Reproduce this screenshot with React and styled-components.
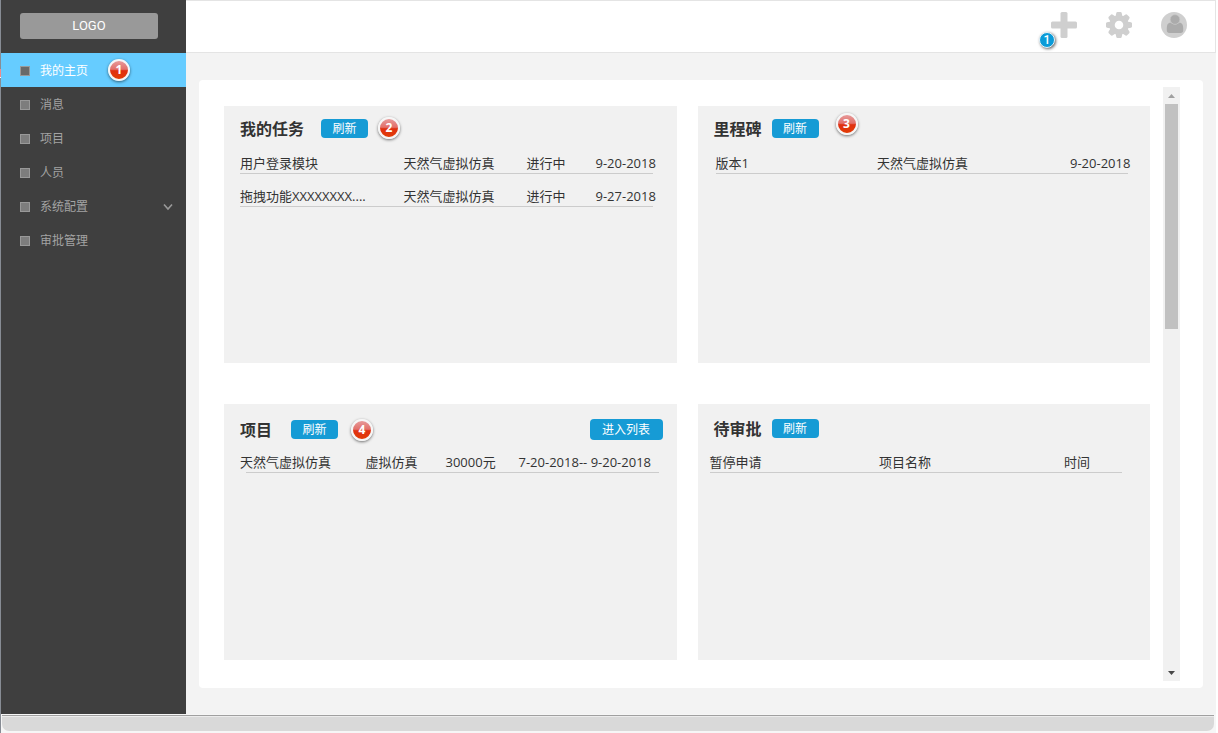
import React from "react";
import styled, { createGlobalStyle } from "styled-components";

const GlobalStyle = createGlobalStyle`
  *, *::before, *::after { box-sizing: border-box; }
  body {
    margin: 0;
    background: #fff;
    color: #333;
    font-family: "Open Sans", "Noto Sans CJK SC", sans-serif;
    font-size: 13px;
  }
  button { font-family: inherit; cursor: pointer; }
`;

const Shell = styled.div`
  position: relative;
  display: flex;
  flex-direction: column;
  min-height: 100vh;
  padding-right: 2px;
  border-left: 1px solid #878c94;
`;

const EdgeMark = styled.span`
  position: absolute;
  left: -1px;
  top: 69px;
  width: 1px;
  height: 9px;
  background: #ef8a8a;
  border-bottom: 1px solid #fff;
`;

const Body = styled.div`
  display: flex;
  flex: 1;
`;

const Sidebar = styled.aside`
  flex: 0 0 185px;
  background: #3f3f3f;
`;

const Logo = styled.div`
  height: 26px;
  margin: 13px 28px 14px 19px;
  border-radius: 3px;
  background: #999;
  color: #fff;
  font: 400 13px/26px Roboto, sans-serif;
  text-align: center;
`;

const NavItem = styled.a`
  position: relative;
  display: flex;
  align-items: center;
  gap: 10px;
  height: 34px;
  padding: 2px 13px 0 19px;
  background: ${(p) => (p.$active ? "#66ccff" : "transparent")};
  color: ${(p) => (p.$active ? "#fff" : "#a3a3a3")};
  font-size: 12px;
  line-height: 18px;
  text-decoration: none;

  &::before {
    content: "";
    width: 10px;
    height: 10px;
    border: 1px solid #999;
    background: ${(p) => (p.$active ? "#696969" : "#7d7d7d")};
  }
  svg { margin-left: auto; }
`;

const Content = styled.div`
  display: flex;
  flex: 1;
  flex-direction: column;
  min-width: 0;
  background: #f3f3f3;
`;

const TopBar = styled.header`
  display: flex;
  justify-content: flex-end;
  align-items: center;
  gap: 29px;
  height: 53px;
  padding: 0 28px 3px 0;
  border: 1px solid #e4e4e4;
  border-left: 0;
  background: #fff;
`;

const IconButton = styled.button`
  position: relative;
  width: 26px;
  height: 26px;
  padding: 0;
  border: 0;
  background: none;
  svg { display: block; }
`;

const CountBadge = styled.span`
  position: absolute;
  left: -12px;
  top: 20px;
  width: 16px;
  height: 16px;
  border: 1px solid #e8f4fa;
  border-radius: 50%;
  background: #0b9bd8;
  box-shadow: 1px 1px 3px rgba(0, 0, 0, 0.6);
  color: #fff;
  font: 500 12px/14px Roboto, sans-serif;
  text-align: center;
`;

const Card = styled.main`
  display: flex;
  flex: 1;
  gap: 13px;
  margin: 27px 13px 26px;
  padding: 7px 23px 7px 25px;
  border-radius: 4px;
  background: #fff;
`;

const Panels = styled.div`
  display: grid;
  flex: 1;
  grid-template-columns: repeat(2, minmax(0, 1fr));
  grid-auto-rows: minmax(240px, 1fr);
  gap: 41px 21px;
  padding: 19px 0 21px;
`;

const PanelBox = styled.section`
  position: relative;
  background: #f1f1f1;
`;

const PanelHead = styled.div`
  display: flex;
  align-items: center;
  gap: ${(p) => p.$gap}px;
  height: ${(p) => p.$height}px;
  padding: ${(p) => p.$drop}px 14px 0 16px;
`;

const Title = styled.h2`
  margin: 0;
  color: #333;
  font-size: 16px;
  font-weight: 700;
  line-height: 20px;
`;

const ActionButton = styled.button`
  height: ${(p) => (p.$wide ? 21 : 19)}px;
  width: ${(p) => (p.$wide ? 73 : 47)}px;
  margin-left: ${(p) => (p.$wide ? "auto" : "0")};
  padding: 0;
  border: 0;
  border-radius: 4px;
  background: #169bd5;
  color: #fff;
  font-size: 12px;
  line-height: 18px;
`;

const Pin = styled.span`
  position: absolute;
  left: ${(p) => p.$x}px;
  top: ${(p) => p.$y}px;
  width: 22px;
  height: 22px;
  border: 2px solid #f6f6f6;
  border-radius: 50%;
  background: linear-gradient(#e79a9a 0%, #e2706a 46%, #e03010 54%, #e23c06 100%);
  box-shadow: 0 1px 3px rgba(0, 0, 0, 0.55);
  color: #fff;
  font: 700 12px/18px "Open Sans", sans-serif;
  text-align: center;
`;

const DataTable = styled.table`
  width: calc(100% - 40px);
  margin-left: ${(p) => p.$inset}px;
  border-collapse: separate;
  border-spacing: 0;
  table-layout: fixed;

  td {
    height: 33px;
    padding: 12px 0 0;
    border-bottom: 1px solid #ccc;
    line-height: 18px;
    text-indent: ${(p) => p.$indent || 0}px;
    white-space: nowrap;
  }
`;

const ScrollTrack = styled.div`
  display: flex;
  flex: 0 0 17px;
  flex-direction: column;
  align-items: center;
  background: #f1f1f1;
`;

const ScrollArrow = styled.button`
  display: flex;
  align-items: center;
  justify-content: center;
  width: 17px;
  height: 17px;
  padding: 0;
  border: 0;
  background: none;
`;

const ScrollThumb = styled.div`
  width: 13px;
  height: 225px;
  margin-bottom: auto;
  background: #c1c1c1;
`;

const Footer = styled.footer`
  height: 19px;
  padding: 1px 2px 2px 1px;
  background: #f6f6f6;
`;

const FooterBar = styled.div`
  height: 16px;
  border-top: 1px solid #a0a0a0;
  border-radius: 0 0 7px 7px;
  background: #d9d9d9;
  box-shadow: inset 0 1px 0 #ececec;
`;

const navItems = ["我的主页", "消息", "项目", "人员", "系统配置", "审批管理"];

const panels = [
  {
    title: "我的任务",
    gap: 17,
    height: 35,
    drop: 10,
    pin: { n: 2, x: 154, y: 11 },
    inset: 16,
    cols: ["auto", 123, 69, 57],
    rows: [
      ["用户登录模块", "天然气虚拟仿真", "进行中", "9-20-2018"],
      ["拖拽功能XXXXXXXX....", "天然气虚拟仿真", "进行中", "9-27-2018"],
    ],
  },
  {
    title: "里程碑",
    gap: 10,
    height: 35,
    drop: 10,
    pin: { n: 3, x: 138, y: 7 },
    inset: 18,
    cols: ["auto", 193, 58],
    rows: [["版本1", "天然气虚拟仿真", "9-20-2018"]],
  },
  {
    title: "项目",
    gap: 19,
    height: 36,
    drop: 16,
    pin: { n: 4, x: 127, y: 15 },
    listLink: "进入列表",
    inset: 22,
    indent: -6,
    cols: ["auto", 80, 73, 134],
    rows: [["天然气虚拟仿真", "虚拟仿真", "30000元", "7-20-2018-- 9-20-2018"]],
  },
  {
    title: "待审批",
    gap: 10,
    height: 36,
    drop: 14,
    inset: 12,
    cols: ["auto", 185, 58],
    rows: [["暂停申请", "项目名称", "时间"]],
  },
];

function Panel({ title, gap, height, drop, pin, listLink, inset, indent, cols, rows }) {
  return (
    <PanelBox aria-label={title}>
      <PanelHead $gap={gap} $height={height} $drop={drop}>
        <Title>{title}</Title>
        <ActionButton type="button">刷新</ActionButton>
        {listLink && (
          <ActionButton type="button" $wide>
            {listLink}
          </ActionButton>
        )}
      </PanelHead>
      {pin && (
        <Pin $x={pin.x} $y={pin.y}>
          {pin.n}
        </Pin>
      )}
      <DataTable $inset={inset} $indent={indent}>
        <colgroup>
          {cols.map((w, i) => (
            <col key={i} width={w === "auto" ? undefined : w} />
          ))}
        </colgroup>
        <tbody>
          {rows.map((row) => (
            <tr key={row[0]}>
              {row.map((cell, i) => (
                <td key={i}>{cell}</td>
              ))}
            </tr>
          ))}
        </tbody>
      </DataTable>
    </PanelBox>
  );
}

const gearTeeth = [0, 45, 90, 135, 180, 225, 270, 315];

export default function App() {
  return (
    <>
      <GlobalStyle />
      <Shell>
        <EdgeMark />
        <Body>
          <Sidebar>
            <Logo>LOGO</Logo>
            <nav>
              {navItems.map((label, i) => (
                <NavItem href="#" key={label} $active={i === 0}>
                  {label}
                  {i === 0 && (
                    <Pin $x={107} $y={6}>
                      1
                    </Pin>
                  )}
                  {label === "系统配置" && (
                    <svg width="10" height="8" viewBox="0 0 10 8" fill="none" stroke="#999" strokeWidth="1.6">
                      <path d="M1 1.5 L5 6 L9 1.5" />
                    </svg>
                  )}
                </NavItem>
              ))}
            </nav>
          </Sidebar>
          <Content>
            <TopBar>
              <IconButton type="button" aria-label="新增">
                <svg width="26" height="26" viewBox="0 0 26 26" fill="#cfcfcf">
                  <rect x="9.5" y="0" width="7" height="26" rx="1.5" />
                  <rect x="0" y="9.5" width="26" height="7" rx="1.5" />
                </svg>
                <CountBadge>1</CountBadge>
              </IconButton>
              <IconButton type="button" aria-label="设置">
                <svg width="26" height="26" viewBox="0 0 26 26" fill="#cfcfcf">
                  {gearTeeth.map((a) => (
                    <path key={a} d="M9.4 5 L10.3 1 Q10.5 0 11.5 0 H14.5 Q15.5 0 15.7 1 L16.6 5 Z" transform={`rotate(${a} 13 13)`} />
                  ))}
                  <circle cx="13" cy="13" r="7" fill="none" stroke="#cfcfcf" strokeWidth="5.4" />
                </svg>
              </IconButton>
              <IconButton type="button" aria-label="用户">
                <svg width="26" height="26" viewBox="0 0 26 26">
                  <circle cx="13" cy="13" r="13" fill="#cfcfcf" />
                  <path d="M9.2 10.5 C6.8 11 5.8 13 5.8 16 V18.3 Q5.8 21 8.5 21 H19.5 Q22.2 21 22.2 18.3 V16 C22.2 13 21.2 11 18.8 10.5 Q14 14.5 9.2 10.5 Z" fill="#ababab" />
                  <circle cx="14" cy="7.5" r="4.8" fill="#ababab" stroke="#c4c4c4" strokeWidth="0.7" />
                </svg>
              </IconButton>
            </TopBar>
            <Card>
              <Panels>
                {panels.map((panel) => (
                  <Panel key={panel.title} {...panel} />
                ))}
              </Panels>
              <ScrollTrack>
                <ScrollArrow type="button" aria-label="向上滚动">
                  <svg width="7" height="4" viewBox="0 0 7 4" fill="#a0a0a0">
                    <path d="M0 4 L3.5 0 L7 4 Z" />
                  </svg>
                </ScrollArrow>
                <ScrollThumb />
                <ScrollArrow type="button" aria-label="向下滚动">
                  <svg width="7" height="4" viewBox="0 0 7 4" fill="#484848">
                    <path d="M0 0 L3.5 4 L7 0 Z" />
                  </svg>
                </ScrollArrow>
              </ScrollTrack>
            </Card>
          </Content>
        </Body>
        <Footer>
          <FooterBar />
        </Footer>
      </Shell>
    </>
  );
}
